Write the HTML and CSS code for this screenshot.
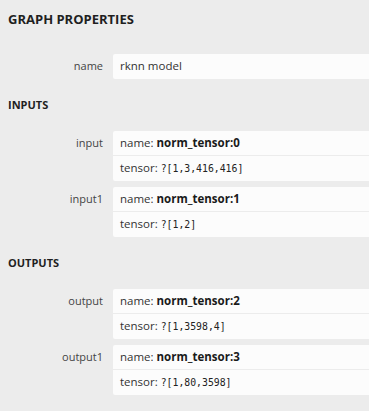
FILE: index.html
```html
<!DOCTYPE html>
<html lang="en">
<head>
  <meta charset="UTF-8" />
  <title>Properties</title>
  <link rel="stylesheet" href="styles.css">
</head>
<body>

  <div class="sidebar">
    <div class="sidebar-title">Graph Properties</div>

    <div class="item">
      <div class="item-name">name</div>
      <div class="item-value">
        <div class="line">rknn model</div>
      </div>
    </div>

    <div class="section">Inputs</div>

    <div class="item">
      <div class="item-name">input</div>
      <div class="item-value">
        <div class="line">name: <b>norm_tensor:0</b></div>
        <div class="line">tensor: <code>?[1,3,416,416]</code></div>
      </div>
    </div>
    <div class="item">
      <div class="item-name">input1</div>
      <div class="item-value">
        <div class="line">name: <b>norm_tensor:1</b></div>
        <div class="line">tensor: <code>?[1,2]</code></div>
      </div>
    </div>

    <div class="section">Outputs</div>

    <div class="item">
      <div class="item-name">output</div>
      <div class="item-value">
        <div class="line">name: <b>norm_tensor:2</b></div>
        <div class="line">tensor: <code>?[1,3598,4]</code></div>
      </div>
    </div>
    <div class="item">
      <div class="item-name">output1</div>
      <div class="item-value">
        <div class="line">name: <b>norm_tensor:3</b></div>
        <div class="line">tensor: <code>?[1,80,3598]</code></div>
      </div>
    </div>
  </div>

</body>
</html>
```

FILE: styles.css
```css
body {
  margin: 0;
  padding: 0;
  background-color: #ececec;
  font-family: "Open Sans", "Noto Sans", sans-serif;
  color: #333;
  overflow: hidden;
}

.sidebar {
  padding: 9px 0 0 8px;
}

.sidebar-title {
  font-size: 13px;
  font-weight: 700;
  line-height: 20px;
  text-transform: uppercase;
  color: #1f1f1f;
  margin-bottom: 25px;
}

.section {
  font-size: 11px;
  font-weight: 700;
  line-height: 16px;
  text-transform: uppercase;
  color: #1f1f1f;
  margin: 18px 0;
}

.item {
  display: flex;
  margin-bottom: 6px;
}

.item-name {
  width: 95px;
  flex-shrink: 0;
  padding: 5px 10px 5px 0;
  text-align: right;
  font-size: 11px;
  line-height: 14px;
  color: #444;
}

.item-value {
  flex: 1;
  margin-right: -10px;
  background-color: #fcfcfc;
  border-radius: 2px;
}

.line {
  padding: 5px 7px;
  font-size: 11.5px;
  line-height: 14px;
  color: #333;
  border-top: 1px solid #ececec;
}

.line:first-child {
  border-top: none;
}

.line:only-child {
  padding-bottom: 6px;
}

.line b {
  color: #1a1a1a;
}

.line code {
  font-family: "DejaVu Sans Mono", "Liberation Mono", monospace;
  font-size: 9.8px;
  color: #222;
}
```
